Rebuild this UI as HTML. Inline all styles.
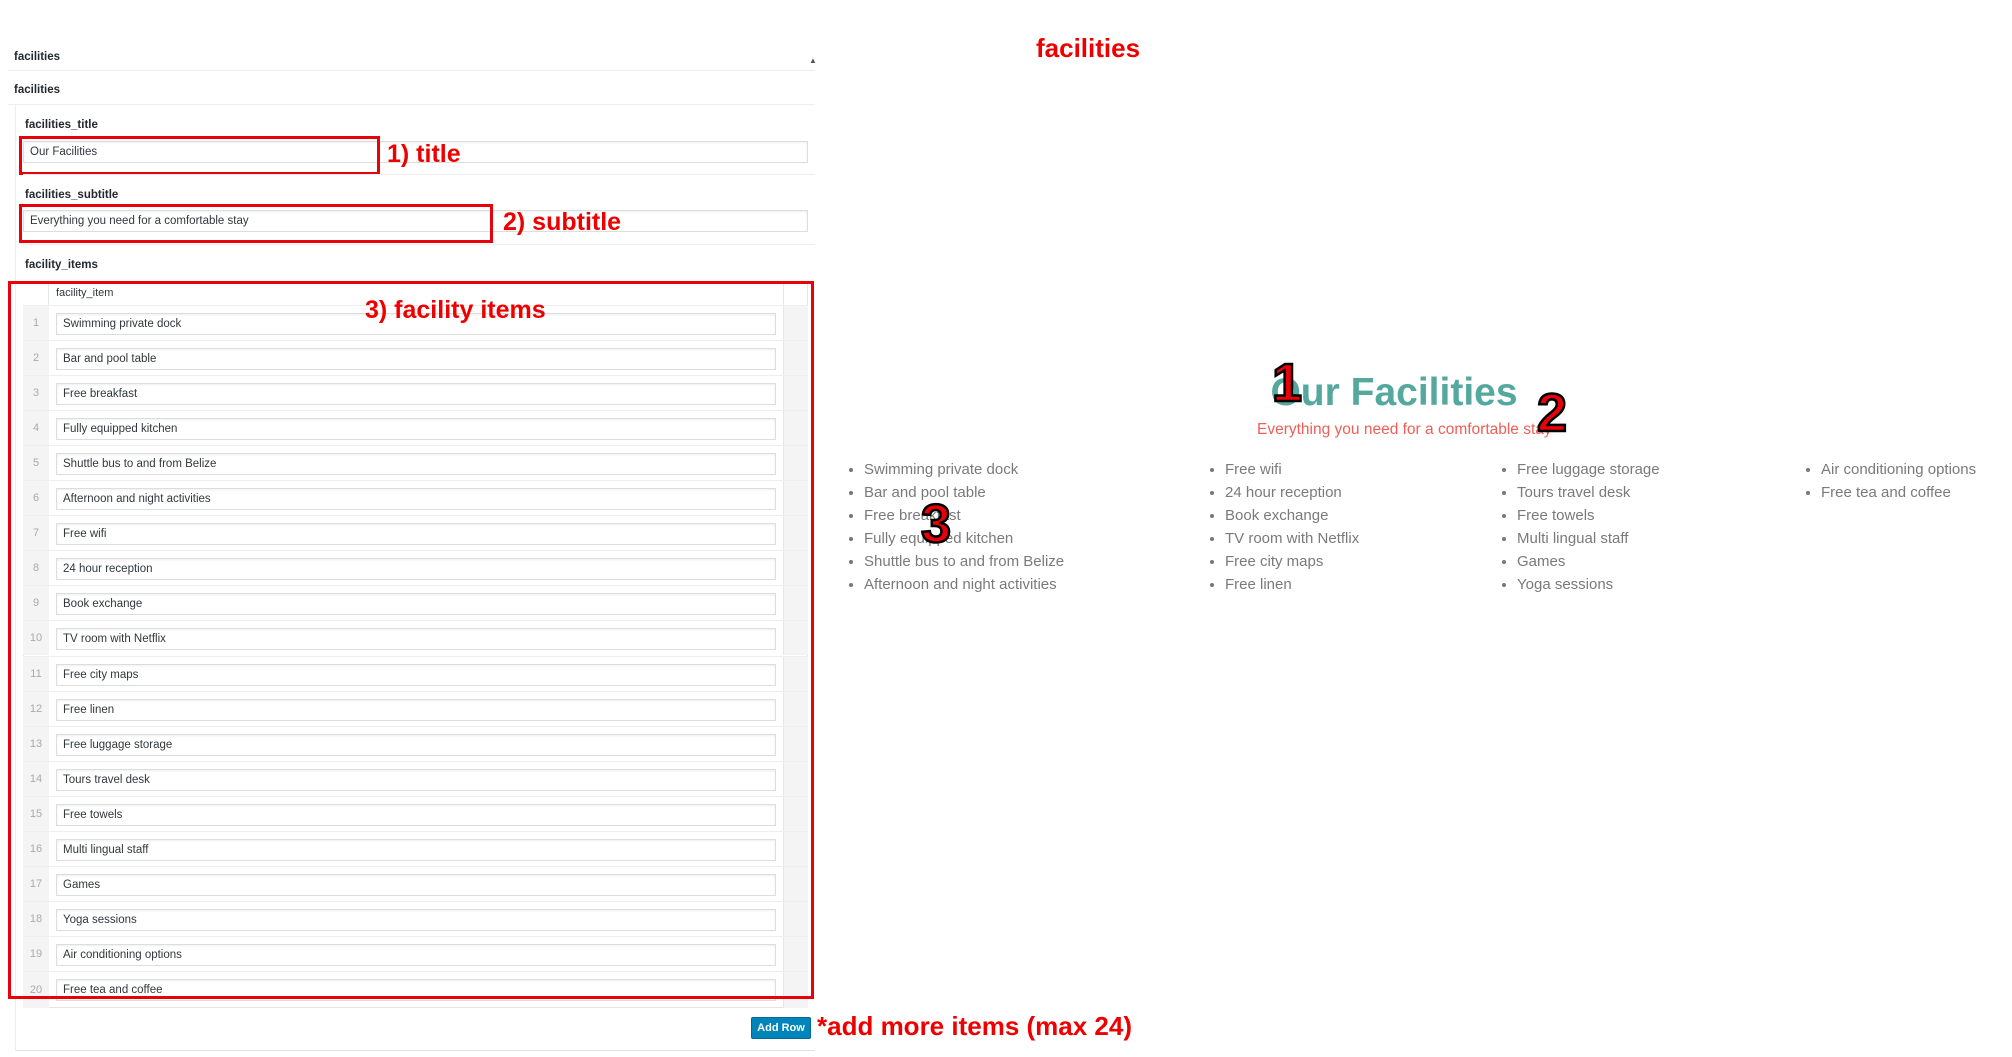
<!DOCTYPE html>
<html><head><meta charset="utf-8"><style>
*{margin:0;padding:0;box-sizing:border-box}
body{width:2012px;height:1057px;background:#fff;position:relative;overflow:hidden;font-family:"Liberation Sans",Arial,sans-serif;color:#23282d}
.a{position:absolute}
.lbl{font-size:11.5px;font-weight:bold;color:#23282d}
.inp{position:absolute;border:1px solid #ddd;box-shadow:inset 0 1px 2px rgba(0,0,0,.07);background:#fff;font-size:11.5px;padding-left:6px;display:flex;align-items:center;color:#32373c}
.red{color:#e00;font-weight:bold}
.rbox{position:absolute;border:3px solid #e8000b}
.row{position:absolute;left:23px;width:785px;height:35px;border-top:1px solid #eee}
.num{position:absolute;left:0;width:26px;height:100%;background:#f4f4f4;color:#aaa;font-size:11px;display:flex;align-items:center;justify-content:center}
.rc{position:absolute;right:0;width:25px;height:100%;background:#f4f4f4;border-left:1px solid #e6e6e6}
ul{list-style:none;position:absolute;font-size:15px;color:#7a7a7a}
ul li{height:23px;line-height:23px;position:relative;padding-left:15px}
ul li:before{content:"";position:absolute;left:0;top:10px;width:4px;height:4px;border-radius:50%;background:#777}
.big{position:absolute;font-weight:bold;font-size:54px;color:#e8000b;-webkit-text-stroke:2.5px #000;line-height:1}
</style></head><body>

<div class="a lbl" style="left:14px;top:51px">facilities</div>
<div class="a" style="left:809px;top:56px;font-size:8px;color:#555">▲</div>
<div class="a" style="left:8px;top:70px;width:807px;border-top:1px solid #eee"></div>
<div class="a lbl" style="left:14px;top:84px">facilities</div>
<div class="a" style="left:8px;top:104px;width:807px;border-top:1px solid #eee"></div>
<div class="a" style="left:15px;top:104px;width:800px;height:947px;border-left:1px solid #eee;border-bottom:1px solid #e2e2e2"></div>

<div class="a lbl" style="left:25px;top:119px">facilities_title</div>
<div class="inp" style="left:23px;top:141px;width:785px;height:22px">Our Facilities</div>
<div class="rbox" style="left:19px;top:136px;width:361px;height:39px"></div>
<div class="a red" style="left:387px;top:140px;font-size:25px">1) title</div>
<div class="a" style="left:23px;top:174px;width:792px;border-top:1px solid #eee"></div>

<div class="a lbl" style="left:25px;top:189px">facilities_subtitle</div>
<div class="inp" style="left:23px;top:210px;width:785px;height:22px">Everything you need for a comfortable stay</div>
<div class="rbox" style="left:19px;top:204px;width:474px;height:39px"></div>
<div class="a red" style="left:503px;top:208px;font-size:25px">2) subtitle</div>
<div class="a" style="left:23px;top:244px;width:792px;border-top:1px solid #eee"></div>

<div class="a lbl" style="left:25px;top:259px">facility_items</div>

<div class="a" style="left:23px;top:283px;width:785px;height:725px;border:1px solid #e5e5e5;background:#fff"></div>
<div class="a" style="left:23px;top:283px;width:26px;height:23px;background:#fff;border-right:1px solid #e5e5e5"></div>
<div class="a" style="left:56px;top:287px;font-size:11px;color:#32373c">facility_item</div>
<div class="a" style="left:783px;top:283px;width:25px;height:23px;border-left:1px solid #e5e5e5"></div>

<div id="rows"></div>

<div class="rbox" style="left:8px;top:281px;width:806px;height:718px"></div>
<div class="a red" style="left:365px;top:296px;font-size:25px">3) facility items</div>

<div class="a" style="left:751px;top:1017px;width:60px;height:22px;background:#0085ba;border:1px solid #006799;border-radius:2px;color:#fff;font-size:11px;font-weight:bold;display:flex;align-items:center;justify-content:center">Add Row</div>
<div class="a red" style="left:817px;top:1011px;font-size:26px">*add more items (max 24)</div>

<div class="a red" style="left:1036px;top:33px;font-size:26px">facilities</div>

<div class="a" style="left:0;width:2012px;top:371px;text-align:center;padding-left:776px;font-size:39px;font-weight:bold;color:#55a89d">Our Facilities</div>
<div class="a" style="left:1257px;top:421px;font-size:15.5px;color:#ef5f55">Everything you need for a comfortable stay</div>

<ul style="left:849px;top:458px"><li>Swimming private dock</li><li>Bar and pool table</li><li>Free breakfast</li><li>Fully equipped kitchen</li><li>Shuttle bus to and from Belize</li><li>Afternoon and night activities</li></ul>
<ul style="left:1210px;top:458px"><li>Free wifi</li><li>24 hour reception</li><li>Book exchange</li><li>TV room with Netflix</li><li>Free city maps</li><li>Free linen</li></ul>
<ul style="left:1502px;top:458px"><li>Free luggage storage</li><li>Tours travel desk</li><li>Free towels</li><li>Multi lingual staff</li><li>Games</li><li>Yoga sessions</li></ul>
<ul style="left:1806px;top:458px"><li>Air conditioning options</li><li>Free tea and coffee</li></ul>

<div class="big" style="left:1272px;top:356px">1</div>
<div class="big" style="left:1537px;top:386px">2</div>
<div class="big" style="left:921px;top:497px">3</div>

<script>
var items=["Swimming private dock","Bar and pool table","Free breakfast","Fully equipped kitchen","Shuttle bus to and from Belize","Afternoon and night activities","Free wifi","24 hour reception","Book exchange","TV room with Netflix","Free city maps","Free linen","Free luggage storage","Tours travel desk","Free towels","Multi lingual staff","Games","Yoga sessions","Air conditioning options","Free tea and coffee"];
var h="";
for(var i=0;i<20;i++){var t=305+i*35.05;var hh=(i==19)?(1008-t):35.05;
h+='<div class="row" style="top:'+t+'px;height:'+hh+'px"><div class="num">'+(i+1)+'</div><div class="rc"></div><div class="inp" style="left:33px;top:7px;width:720px;height:22px">'+items[i]+'</div></div>';}
document.getElementById("rows").innerHTML=h;
</script>
</body></html>
